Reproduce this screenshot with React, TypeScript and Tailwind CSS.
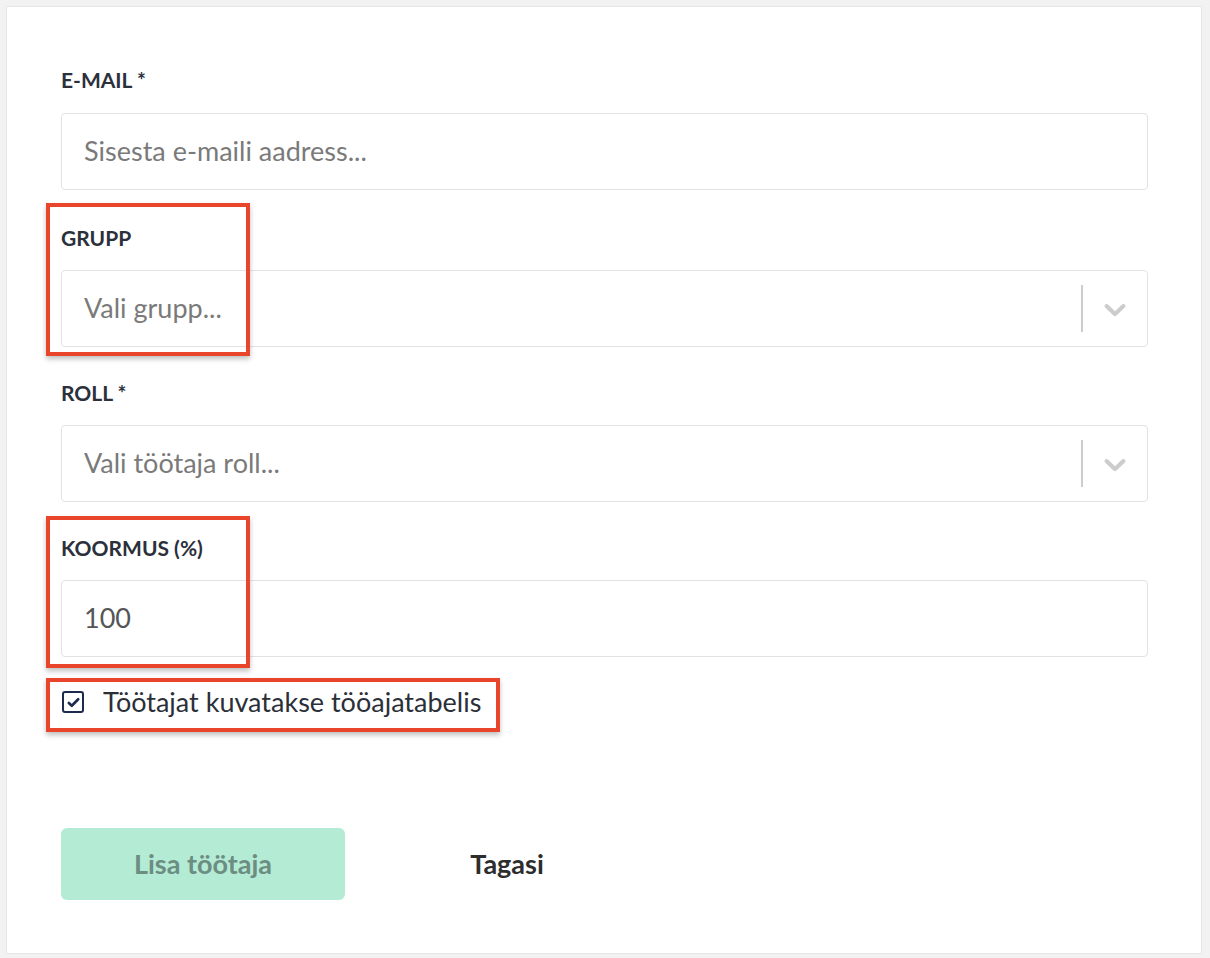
import { useState } from 'react';

const LABEL = 'block text-[21px] leading-[20px] font-bold text-[#2b303b]';
const FIELD_BOX = 'h-[77px] w-full rounded-[4px] border border-[#e2e2e2] bg-white';

function Chevron() {
    return (
        <svg viewBox="0 0 20 20" className="w-9 h-9" fill="#cccccc">
            <path d="M4.516 7.548c0.436-0.446 1.043-0.481 1.576 0l3.908 3.747 3.908-3.747c0.533-0.481 1.141-0.446 1.574 0 0.436 0.445 0.408 1.197 0 1.615-0.406 0.418-4.695 4.502-4.695 4.502-0.217 0.223-0.502 0.335-0.787 0.335s-0.57-0.112-0.789-0.335c0 0-4.287-4.084-4.695-4.502s-0.436-1.17 0-1.615z" />
        </svg>
    );
}

function SelectField({ placeholder }: { placeholder: string }) {
    return (
        <div className={`${FIELD_BOX} flex items-center`}>
            <span className="flex-1 pl-[22px] text-[27px] text-[#7a7a7a]">{placeholder}</span>
            <span className="self-stretch my-[14px] w-[2px] bg-[#cccccc]"></span>
            <span className="px-[14px] flex items-center">
                <Chevron />
            </span>
        </div>
    );
}

function TextField({ placeholder, value }: { placeholder?: string; value?: string }) {
    return (
        <div className={`${FIELD_BOX} flex items-center px-[22px] text-[27px]`}>
            {value ? (
                <span className="text-[#555555]">{value}</span>
            ) : (
                <span className="text-[#7a7a7a]">{placeholder}</span>
            )}
        </div>
    );
}

function Marker({ className }: { className: string }) {
    return (
        <div
            className={`absolute border-4 border-[#e8452c] shadow-[0_3px_5px_rgba(0,0,0,0.25)] pointer-events-none ${className}`}
        ></div>
    );
}

function App() {
    const [isVisibleInTimesheet, setIsVisibleInTimesheet] = useState(true);

    return (
        <div className="min-h-[958px] bg-[#f2f2f2] p-[6px] pr-[8px] pb-[4px] font-['Lato','Noto_Sans',sans-serif]">
            <div className="relative h-[948px] bg-white border border-[#e6e6e6] pl-[54px] pr-[53px] pt-[63px]">
                <section id="employee-form" className="flex flex-col">
                    <div>
                        <label className={LABEL}>E-MAIL *</label>
                        <div className="mt-[23px]">
                            <TextField placeholder="Sisesta e-maili aadress..." />
                        </div>
                    </div>

                    <div className="mt-[38px]">
                        <label className={LABEL}>GRUPP</label>
                        <div className="mt-[22px]">
                            <SelectField placeholder="Vali grupp..." />
                        </div>
                    </div>

                    <div className="mt-[36px]">
                        <label className={LABEL}>ROLL *</label>
                        <div className="mt-[22px]">
                            <SelectField placeholder="Vali töötaja roll..." />
                        </div>
                    </div>

                    <div className="mt-[36px]">
                        <label className={LABEL}>KOORMUS (%)</label>
                        <div className="mt-[22px]">
                            <TextField value="100" />
                        </div>
                    </div>

                    <button
                        type="button"
                        onClick={() => setIsVisibleInTimesheet(!isVisibleInTimesheet)}
                        className="mt-[30px] flex items-center gap-[19px] self-start pl-px"
                    >
                        <span className="w-[22px] h-[22px] rounded-[3px] border-[2.5px] border-[#1d2a4d] flex items-center justify-center">
                            {isVisibleInTimesheet && (
                                <svg viewBox="0 0 16 16" className="w-[15px] h-[15px]" fill="none" stroke="#1d2a4d" strokeWidth="2.8" strokeLinecap="round" strokeLinejoin="round">
                                    <path d="M3 8.5l3.2 3L13 4.5" />
                                </svg>
                            )}
                        </span>
                        <span className="text-[27px] leading-[30px] text-[#2b2f38]">Töötajat kuvatakse tööajatabelis</span>
                    </button>

                    <div className="mt-[111px] flex items-center gap-[20px]">
                        <button
                            type="button"
                            className="w-[284px] h-[72px] rounded-[6px] bg-[#b4ebd5] text-[27px] font-bold text-[#6c8d82]"
                        >
                            Lisa töötaja
                        </button>
                        <button type="button" className="w-[284px] h-[72px] text-[27px] font-bold text-[#2d2d2d]">
                            Tagasi
                        </button>
                    </div>
                </section>

                <Marker className="left-[39px] top-[196px] w-[204px] h-[153px]" />
                <Marker className="left-[39px] top-[509px] w-[204px] h-[152px]" />
                <Marker className="left-[39px] top-[671px] w-[454px] h-[54px]" />
            </div>
        </div>
    );
}

export default App;
